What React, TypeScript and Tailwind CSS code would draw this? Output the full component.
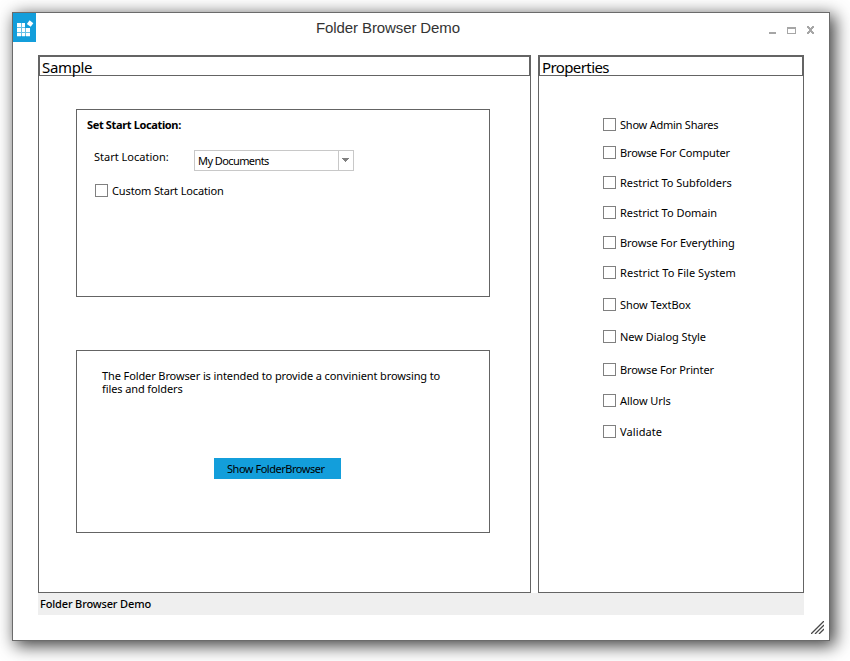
import type { ReactNode } from "react";

const options = [
  { label: "Show Admin Shares", gap: "mt-[42px]", track: "tracking-[-0.23px]" },
  { label: "Browse For Computer", gap: "mt-[15px]", track: "tracking-[-0.15px]" },
  { label: "Restrict To Subfolders", gap: "mt-[17px]", track: "tracking-[-0.03px]" },
  { label: "Restrict To Domain", gap: "mt-[17px]", track: "tracking-[-0.02px]" },
  { label: "Browse For Everything", gap: "mt-[17px]", track: "tracking-[-0.06px]" },
  { label: "Restrict To File System", gap: "mt-[17px]", track: "tracking-[0.06px]" },
  { label: "Show TextBox", gap: "mt-[19px]", track: "tracking-[-0.05px]" },
  { label: "New Dialog Style", gap: "mt-[19px]", track: "tracking-[-0.04px]" },
  { label: "Browse For Printer", gap: "mt-[20px]", track: "tracking-[-0.13px]" },
  { label: "Allow Urls", gap: "mt-[18px]", track: "tracking-[-0.05px]" },
  { label: "Validate", gap: "mt-[18px]", track: "tracking-[0.1px]" },
];

function Check({ label, className }: { label: string; className: string }) {
  return (
    <label className={`flex h-[13px] items-center ${className}`}>
      <span className="size-[13px] shrink-0 border border-[#808080] bg-white" />
      <span className="ml-1 leading-[13px]">{label}</span>
    </label>
  );
}

function Panel({ title, className, titleClass, children }: { title: string; className: string; titleClass: string; children: ReactNode }) {
  return (
    <section className={`h-[538px] border border-[#646464] ${className}`}>
      <h2 className={`h-5 border border-[#646464] pl-0.5 text-[15px] leading-[20px] ${titleClass}`}>{title}</h2>
      {children}
    </section>
  );
}

function Logo() {
  return (
    <svg width="23" height="29" viewBox="0 0 23 29" className="bg-[#139edb]" fill="#fff">
      <path d="M4 10h8v5h5v8H4z" opacity="0.35" />
      <path d="M4 10h4v4H4zM9 10h3v4H9zM4 15h4v4H4zM9 15h3v4H9zM13 15h4v4h-4zM4 20h4v3.300H4zM9 20h3v3.300H9zM13 20h4v3.300h-4z" />
      <path d="M16.600 7.200L20.300 10.200L17.700 13.700L13.800 11z" />
    </svg>
  );
}

export default function App() {
  return (
    <div className="h-[661px] w-[850px] overflow-hidden bg-white pl-3 pt-3 font-['Noto_Sans','Open_Sans',sans-serif] text-[11px] text-black">
      <main className="h-[629px] w-[818px] border border-[#6b6b6b] bg-white shadow-[4px_4px_16px_1px_rgba(0,0,0,0.75)]">
        <header className="flex h-[42px] items-start">
          <Logo />
          <h1 className="ml-[280px] mt-[6px] w-[452px] whitespace-nowrap font-['Liberation_Sans',sans-serif] text-[15px] leading-[18px] tracking-[-0.1px] text-[#333]">
            Folder Browser Demo
          </h1>
          <svg width="48" height="29" viewBox="-4 0 48 29" shapeRendering="crispEdges" fill="#a6a6a6">
            <path d="M-3 19h7v2h-7zM15 14h9v7h-9zM16 16v4h7v-4z" fillRule="evenodd" />
            <path d="M35 13h2v1h1v1h1v-1h1v-1h2v2h-1v1h-1v2h1v1h1v2h-2v-1h-1v-1h-1v1h-1v1h-2v-2h1v-1h1v-2h-1v-1h-1z" />
          </svg>
        </header>
        <div className="ml-[25px] flex gap-[7px]">
          <Panel title="Sample" className="w-[493px]" titleClass="tracking-[-0.33px]">
            <div className="ml-[37px] mt-[33px] h-[188px] w-[414px] border border-[#646464]">
              <h3 className="ml-[10px] mt-[7px] h-[15px] font-bold leading-[15px] tracking-[-0.36px]">Set Start Location:</h3>
              <div className="ml-[17px] mt-[18px] flex">
                <span className="w-[100px] leading-[13px]">Start Location:</span>
                <div className="flex h-[21px] w-[160px] border border-[#c8c8c8]">
                  <span className="w-[143px] pl-[3px] leading-[19px] tracking-[-0.58px]">My Documents</span>
                  <span className="flex flex-1 items-start border-l border-[#c8c8c8] pl-[3px] pt-[7px]">
                    <svg width="7" height="4" viewBox="0 0 7 4" shapeRendering="crispEdges" fill="#808080"><path d="M0 0h7v1H6v1H5v1H4v1H3V3H2V2H1V1H0z" /></svg>
                  </span>
                </div>
              </div>
              <Check label="Custom Start Location" className="ml-[18px] mt-[13px] tracking-[-0.13px]" />
            </div>
            <div className="ml-[37px] mt-[53px] h-[183px] w-[414px] border border-[#646464]">
              <p className="ml-[25px] mt-[18px] h-[27px] w-[350px] leading-[13px] tracking-[-0.11px]">
                The Folder Browser is intended to provide a convinient browsing to files and folders
              </p>
              <button className="ml-[137px] mt-[62px] block h-[21px] w-[127px] bg-[#139edb] pl-[13px] text-left leading-[21px] tracking-[-0.47px]">Show FolderBrowser</button>
            </div>
          </Panel>
          <Panel title="Properties" className="w-[266px]" titleClass="tracking-[-0.6px]">
            {options.map((o) => (
              <Check key={o.label} label={o.label} className={`ml-16 ${o.gap} ${o.track}`} />
            ))}
          </Panel>
        </div>
        <footer className="ml-[25px] h-[22px] w-[766px] bg-[#efefef] pl-0.5 font-medium leading-[22px] tracking-[-0.15px]">Folder Browser Demo</footer>
        <svg width="13" height="13" viewBox="0 0 13 13" className="ml-[798px] mt-[6px]" stroke="#484848" strokeWidth="1.3" fill="none">
          <path d="M0 13L13 0M4 13L13 4M8 13L13 8" />
        </svg>
      </main>
    </div>
  );
}
